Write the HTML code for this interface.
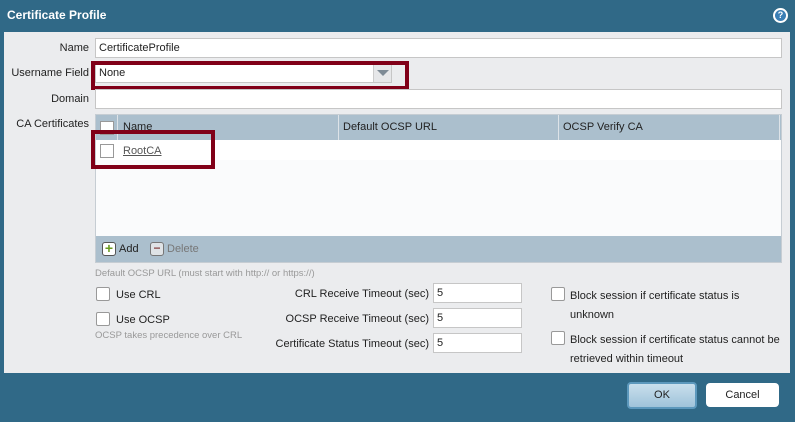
<!DOCTYPE html>
<html><head><style>
*{box-sizing:border-box;margin:0;padding:0}
body{width:795px;height:422px;background:#306987;font-family:"Liberation Sans",sans-serif;font-size:11px;color:#222;position:relative;overflow:hidden}
.a{position:absolute;white-space:nowrap}
.title{left:7px;top:8px;color:#fff;font-weight:bold;font-size:12px}
.body{left:4px;top:32px;width:786px;height:341px;background:#ebecee}
.lbl{text-align:right;width:86px;left:3px}
.inp{background:#fff;border:1px solid #c6c6c6;height:20px;padding-left:3px;line-height:18px}
.red{border:4px solid #800018}
.cb{width:14px;height:14px;border:1px solid #999;background:#fff;border-radius:2px}
.gray{color:#999;font-size:9.5px}
</style></head><body>
<div class="a title">Certificate Profile</div>
<div class="a" style="left:773px;top:8px;width:15px;height:15px;border-radius:50%;background:#fff;"><div style="margin:2px;width:11px;height:11px;border-radius:50%;background:#3b7fb5;color:#fff;font-size:9px;font-weight:bold;text-align:center;line-height:11px">?</div></div>
<div class="a body"></div>
<div class="a lbl" style="top:42px">Name</div>
<div class="a inp" style="left:95px;top:38px;width:687px">CertificateProfile</div>
<div class="a lbl" style="top:67px">Username Field</div>
<div class="a inp" style="left:95px;top:63px;width:297px">None</div>
<div class="a" style="left:373px;top:64px;width:18px;height:18px;background:#e6e7e9;border-left:1px solid #ccc"><div style="margin:6px 3px;width:0;height:0;border-left:6px solid transparent;border-right:6px solid transparent;border-top:6px solid #7d8a95"></div></div>
<div class="a red" style="left:91px;top:61px;width:318px;height:29px"></div>
<div class="a lbl" style="top:93px">Domain</div>
<div class="a inp" style="left:95px;top:89px;width:687px"></div>
<div class="a lbl" style="top:118px">CA Certificates</div>
<div class="a" style="left:95px;top:114px;width:687px;height:149px;background:#fafbfc;border:1px solid #c6cdd3"></div>
<div class="a" style="left:96px;top:115px;width:685px;height:25px;background:#abbfcd"></div>
<div class="a" style="left:117px;top:115px;width:1px;height:45px;background:#dde3e8"></div>
<div class="a" style="left:338px;top:115px;width:1px;height:45px;background:#dde3e8"></div>
<div class="a" style="left:558px;top:115px;width:1px;height:45px;background:#dde3e8"></div>
<div class="a" style="left:779px;top:115px;width:1px;height:45px;background:#dde3e8"></div>
<div class="a cb" style="left:100px;top:121px;border-radius:0"></div>
<div class="a" style="left:123px;top:121px">Name</div>
<div class="a" style="left:343px;top:121px">Default OCSP URL</div>
<div class="a" style="left:563px;top:121px">OCSP Verify CA</div>
<div class="a" style="left:96px;top:140px;width:685px;height:20px;background:#fff"></div>
<div class="a cb" style="left:100px;top:144px;border-radius:0"></div>
<div class="a" style="left:123px;top:145px;color:#555;text-decoration:underline">RootCA</div>
<div class="a red" style="left:91px;top:130px;width:124px;height:39px"></div>
<div class="a" style="left:96px;top:236px;width:685px;height:26px;background:#abbfcd"></div>
<div class="a" style="left:102px;top:242px;width:14px;height:14px;border:1px solid #555;border-radius:3px;background:#fff;color:#6a9a1e;font-weight:bold;font-size:14px;line-height:11px;text-align:center">+</div>
<div class="a" style="left:119px;top:243px">Add</div>
<div class="a" style="left:150px;top:242px;width:14px;height:14px;border:1px solid #777;border-radius:3px;background:#dfe3e6;color:#8a4a4a;font-weight:bold;font-size:12px;line-height:11px;text-align:center">−</div>
<div class="a" style="left:167px;top:243px;color:#777">Delete</div>
<div class="a gray" style="left:95px;top:268px">Default OCSP URL (must start with http:// or https://)</div>
<div class="a cb" style="left:96px;top:287px"></div>
<div class="a" style="left:116px;top:289px">Use CRL</div>
<div class="a cb" style="left:96px;top:312px"></div>
<div class="a" style="left:116px;top:314px">Use OCSP</div>
<div class="a gray" style="left:95px;top:330px">OCSP takes precedence over CRL</div>
<div class="a" style="left:220px;top:288px;width:209px;text-align:right">CRL Receive Timeout (sec)</div>
<div class="a" style="left:220px;top:313px;width:209px;text-align:right">OCSP Receive Timeout (sec)</div>
<div class="a" style="left:220px;top:338px;width:209px;text-align:right">Certificate Status Timeout (sec)</div>
<div class="a inp" style="left:433px;top:283px;width:89px">5</div>
<div class="a inp" style="left:433px;top:308px;width:89px">5</div>
<div class="a inp" style="left:433px;top:333px;width:89px">5</div>
<div class="a cb" style="left:551px;top:287px"></div>
<div class="a" style="left:570px;top:287px;line-height:19px">Block session if certificate status is<br>unknown</div>
<div class="a cb" style="left:551px;top:331px"></div>
<div class="a" style="left:570px;top:331px;line-height:19px">Block session if certificate status cannot be<br>retrieved within timeout</div>
<div class="a" style="left:627px;top:382px;width:70px;height:27px;border:2px solid #5c98bc;border-radius:4px;background:linear-gradient(#c9dfec,#9fc3da);text-align:center;line-height:23px">OK</div>
<div class="a" style="left:706px;top:383px;width:73px;height:24px;border-radius:4px;background:#fff;text-align:center;line-height:24px">Cancel</div>
</body></html>
